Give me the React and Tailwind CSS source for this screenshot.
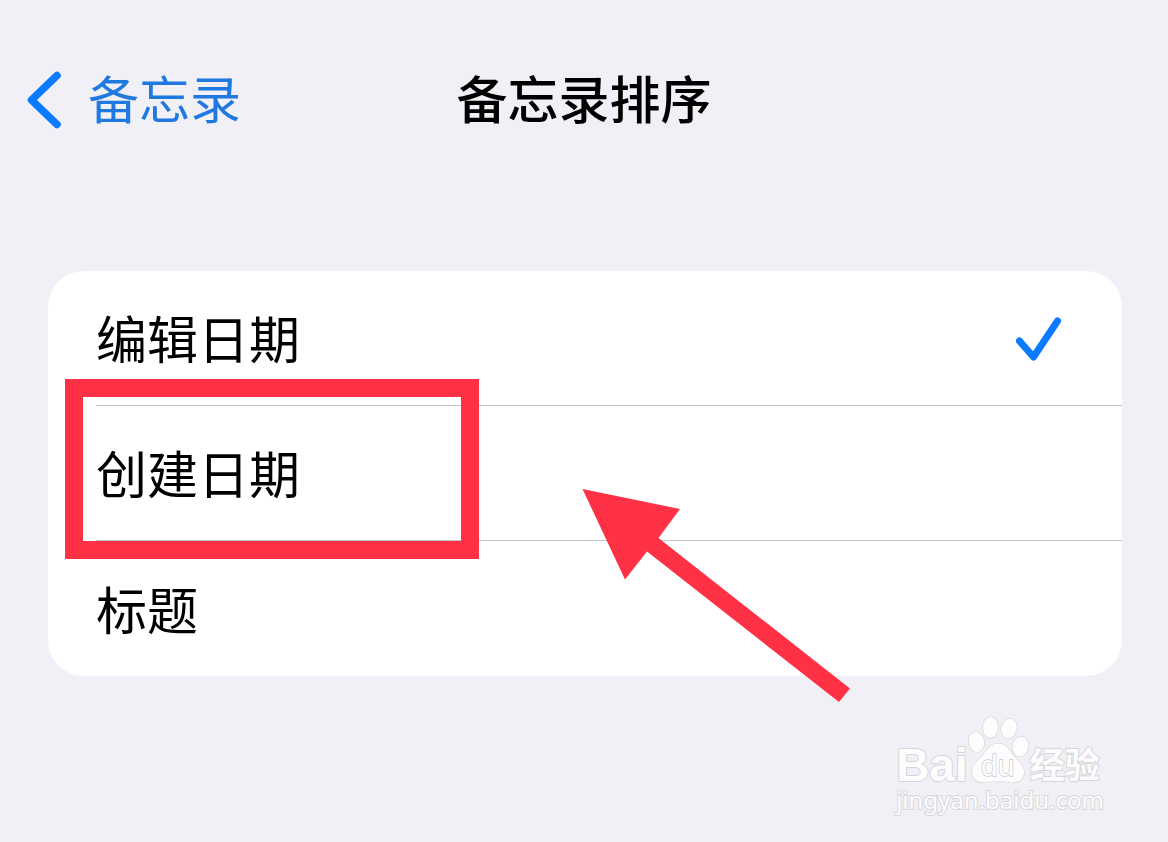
import { useState } from "react";

const OPTIONS = [
  { id: "edited", label: "编辑日期" },
  { id: "created", label: "创建日期" },
  { id: "title", label: "标题" },
];

function CheckMark() {
  return (
    <svg viewBox="0 -6 48 52" className="h-[52px] w-12 shrink-0" fill="none" aria-hidden="true">
      <path d="M5.500 24L19.500 40L43.500 4" stroke="#0a7aff" strokeWidth="7" strokeLinecap="round" strokeLinejoin="round" />
    </svg>
  );
}

function Annotation() {
  return (
    <>
      <div className="pointer-events-none absolute -top-[27px] left-[17px] h-[180px] w-[414px] border-[18px] border-[#ff3144]" />
      <svg viewBox="0 0 268 214" className="pointer-events-none absolute top-[83px] left-[534px] h-[214px] w-[268px]" aria-hidden="true">
        <path d="M0.500 0L98 20L76.500 49L268 199.500L257 213L65 62.500L43 90.500Z" fill="#ff3144" />
      </svg>
    </>
  );
}

function Paw() {
  return (
    <svg viewBox="2 0 62 68" className="h-[68px] w-[62px] shrink-0" aria-hidden="true">
      <g fill="#fdfdfe" stroke="#d0d0d4" strokeWidth="1.200">
        <ellipse cx="10.500" cy="26" rx="7.800" ry="10" transform="rotate(-8 10.500 26)" />
        <ellipse cx="24.500" cy="11.500" rx="7.700" ry="10.500" />
        <ellipse cx="43" cy="12.500" rx="7.700" ry="10" transform="rotate(12 43 12.500)" />
        <ellipse cx="54.500" cy="30.500" rx="8" ry="10" transform="rotate(8 54.500 30.500)" />
        <path d="M32 27.500C40 27.500 43.500 34 47 39C51 44 58 48 58 56C58 65 50 68 42 66C36 64.500 28 64.500 22 66C13 68 6 64 6 55C6 48 13 44 17 39C21 33.500 24 27.500 32 27.500Z" />
      </g>
      <text x="15" y="60" fontSize="30" fontFamily="Liberation Sans, Arial, sans-serif" fill="#fdfdfe" stroke="#c9c9ce" strokeWidth="1.300">du</text>
    </svg>
  );
}

export default function App() {
  const [selected, setSelected] = useState("edited");

  return (
    <div className="min-h-screen overflow-x-hidden bg-[#f1f0f6] font-['Noto_Sans_CJK_SC',sans-serif] text-[51px] leading-[60px] text-black">
      <header className="grid grid-cols-[1fr_auto_1fr] items-center pt-[67px]">
        <a href="#notes" className="flex items-center gap-6 pl-6 text-[#2079e0]">
          <svg viewBox="0 -3 40 60" className="h-[60px] w-10 shrink-0 overflow-visible" fill="none" aria-hidden="true">
            <path d="M33 5.500L7.500 30L33 54.500" stroke="#0a7aff" strokeWidth="7.500" strokeLinecap="round" strokeLinejoin="round" />
          </svg>
          备忘录
        </a>
        <h1 className="font-medium">备忘录排序</h1>
      </header>

      <main className="mt-36 mr-[46px] ml-12">
        <div role="radiogroup" aria-label="备忘录排序" className="rounded-[36px] bg-white">
          {OPTIONS.map((option, index) => (
            <div key={option.id} className="relative pl-12">
              <label
                className={
                  index < OPTIONS.length - 1
                    ? "flex h-[135px] items-center justify-between border-b border-[#c4c4c8] pr-[60px] pb-0.5"
                    : "flex h-[135px] items-center justify-between pr-[60px] pb-0.5"
                }
              >
                <input
                  type="radio"
                  name="sort"
                  value={option.id}
                  checked={selected === option.id}
                  onChange={() => setSelected(option.id)}
                  className="sr-only"
                />
                <span>{option.label}</span>
                {selected === option.id && <CheckMark />}
              </label>
              {option.id === "created" && <Annotation />}
            </div>
          ))}
        </div>
      </main>

      <footer className="mt-10 flex justify-end pr-16">
        <div className="flex flex-col text-[#fdfdfe] [-webkit-text-stroke:2px_#d6d6da] [paint-order:stroke_fill]">
          <div className="flex items-end">
            <span className="font-['Liberation_Sans',Arial,sans-serif] text-[46px] leading-[38px] font-bold">Bai</span>
            <Paw />
            <span className="text-[35px] leading-[42px] font-bold">经验</span>
          </div>
          <span className="font-['Noto_Sans',sans-serif] text-[24px] leading-8">jingyan.baidu.com</span>
        </div>
      </footer>
    </div>
  );
}
